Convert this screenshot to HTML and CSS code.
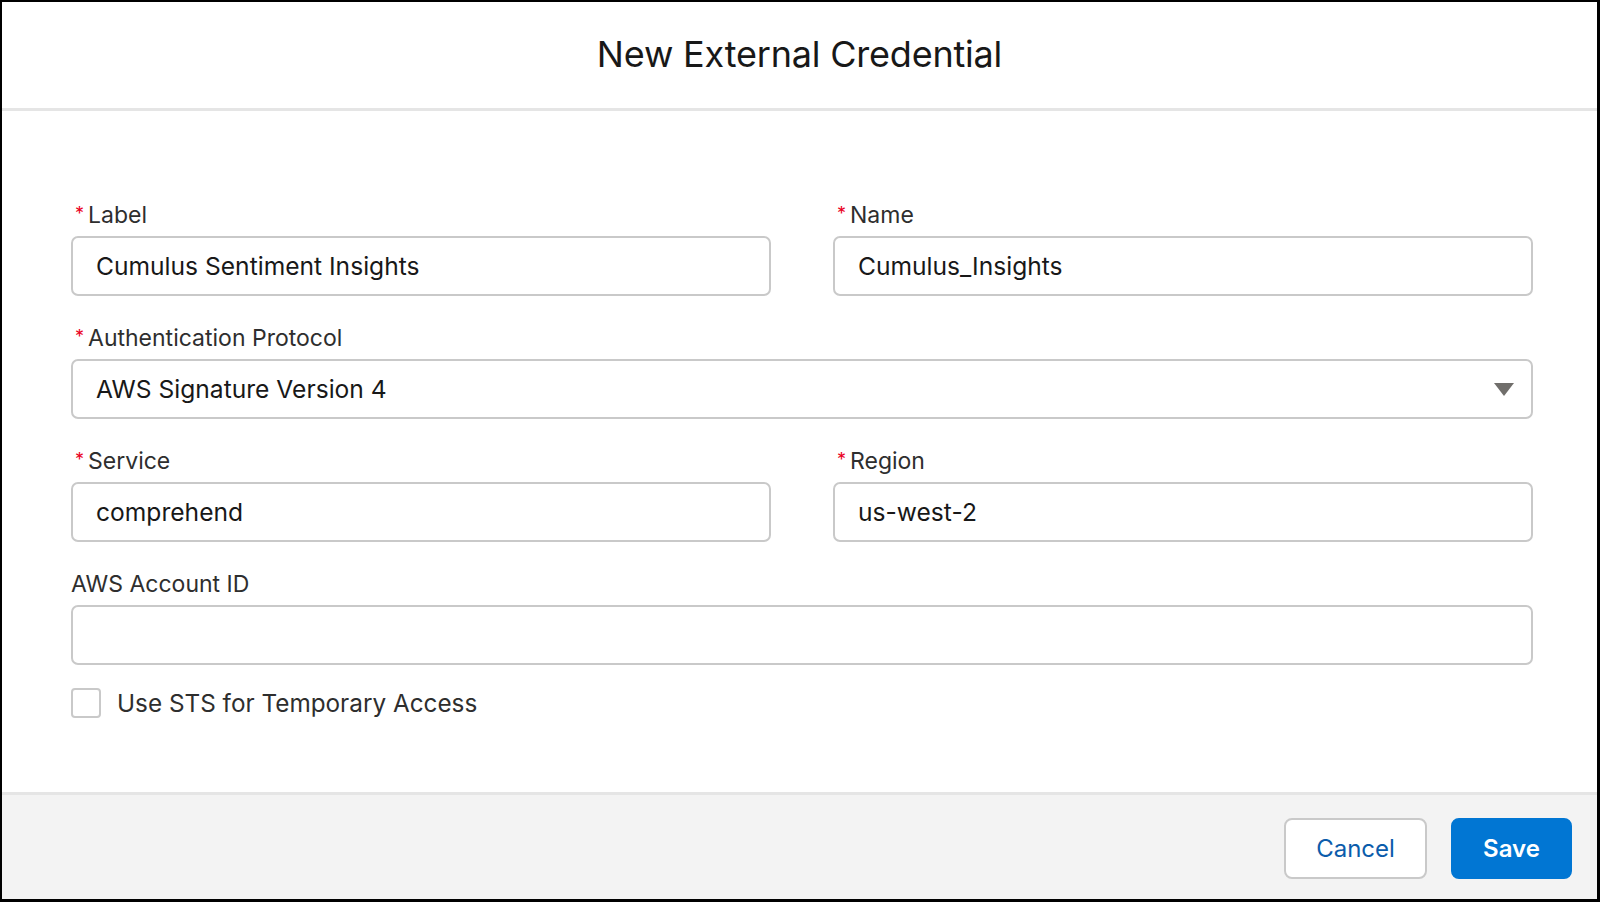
FILE: index.html
```html
<!DOCTYPE html>
<html lang="en">
<head>
    <meta charset="UTF-8">
    <meta name="viewport" content="width=device-width, initial-scale=1.0">
    <title>New External Credential</title>
    <link rel="stylesheet" href="styles.css">
</head>
<body>

<div class="modal">
    <header class="modal-header">
        <h1 class="modal-title">New External Credential</h1>
    </header>

    <div class="modal-body">
        <div class="form-row">
            <div class="field">
                <label class="field-label"><abbr class="req">*</abbr>Label</label>
                <div class="input">Cumulus Sentiment Insights</div>
            </div>
            <div class="field">
                <label class="field-label"><abbr class="req">*</abbr>Name</label>
                <div class="input">Cumulus_Insights</div>
            </div>
        </div>

        <div class="form-row">
            <div class="field">
                <label class="field-label"><abbr class="req">*</abbr>Authentication Protocol</label>
                <div class="input select">
                    <span>AWS Signature Version 4</span>
                    <svg class="caret" viewBox="0 0 20 13" xmlns="http://www.w3.org/2000/svg">
                        <path d="M0 0h20L10 13z"/>
                    </svg>
                </div>
            </div>
        </div>

        <div class="form-row">
            <div class="field">
                <label class="field-label"><abbr class="req">*</abbr>Service</label>
                <div class="input">comprehend</div>
            </div>
            <div class="field">
                <label class="field-label"><abbr class="req">*</abbr>Region</label>
                <div class="input">us-west-2</div>
            </div>
        </div>

        <div class="form-row">
            <div class="field">
                <label class="field-label">AWS Account ID</label>
                <div class="input"></div>
            </div>
        </div>

        <label class="checkbox">
            <span class="box"></span>
            <span>Use STS for Temporary Access</span>
        </label>
    </div>

    <footer class="modal-footer">
        <button class="btn neutral">Cancel</button>
        <button class="btn brand">Save</button>
    </footer>
</div>

</body>
</html>
```

FILE: styles.css
```css
* {
    margin: 0;
    padding: 0;
    box-sizing: border-box;
}
body {
    font-family: Inter, "Noto Sans", sans-serif;
    background-color: #fff;
    color: #181818;
    width: 1600px;
    height: 902px;
    overflow: hidden;
}
.modal {
    width: 1600px;
    height: 902px;
    border: 2px solid #000;
    border-right-width: 3px;
    border-bottom-width: 3px;
    display: flex;
    flex-direction: column;
    background: #fff;
}
.modal-header {
    height: 109px;
    border-bottom: 3px solid #e5e5e5;
    display: flex;
    justify-content: center;
    align-items: center;
    padding-bottom: 2px;
}
.modal-title {
    font-size: 36px;
    font-weight: 400;
    letter-spacing: -0.2px;
    color: #181818;
}
.modal-body {
    flex: 1;
    padding: 92px 64px 0 69px;
}
.form-row {
    display: flex;
    gap: 62px;
    margin-bottom: 30px;
}
.field {
    flex: 1;
}
.field-label {
    display: flex;
    align-items: center;
    height: 24px;
    font-size: 23px;
    color: #2e2e2e;
    margin-bottom: 9px;
}
.req {
    color: #ea001e;
    text-decoration: none;
    font-size: 18px;
    margin: 0 4px 0 4px;
    align-self: flex-start;
    line-height: 18px;
    padding-top: 2px;
}
.input {
    height: 60px;
    border: 2px solid #c9c9c9;
    border-radius: 7px;
    padding: 0 23px;
    display: flex;
    align-items: center;
    font-size: 24.6px;
    color: #181818;
    background: #fff;
}
.select {
    justify-content: space-between;
    padding-right: 17px;
}
.caret {
    width: 20px;
    height: 13px;
    fill: #706e6b;
}
.checkbox {
    display: flex;
    align-items: center;
    gap: 16px;
    font-size: 24.3px;
    color: #2e2e2e;
    margin-top: -7px;
}
.box {
    width: 30px;
    height: 30px;
    border: 2px solid #c9c9c9;
    border-radius: 4px;
    background: #fff;
}
.modal-footer {
    height: 107px;
    border-top: 3px solid #e5e5e5;
    background: #f3f3f3;
    display: flex;
    justify-content: flex-end;
    align-items: flex-start;
    gap: 24px;
    padding: 23px 25px 0 0;
}
.btn {
    height: 61px;
    border-radius: 8px;
    font-family: Inter, "Noto Sans", sans-serif;
    font-size: 24px;
    cursor: pointer;
}
.btn.neutral {
    width: 143px;
    background: #fff;
    border: 2px solid #c9c9c9;
    color: #0b5cab;
}
.btn.brand {
    width: 121px;
    background: #0176d3;
    border: 2px solid #0176d3;
    color: #fff;
    font-weight: 600;
}
```
